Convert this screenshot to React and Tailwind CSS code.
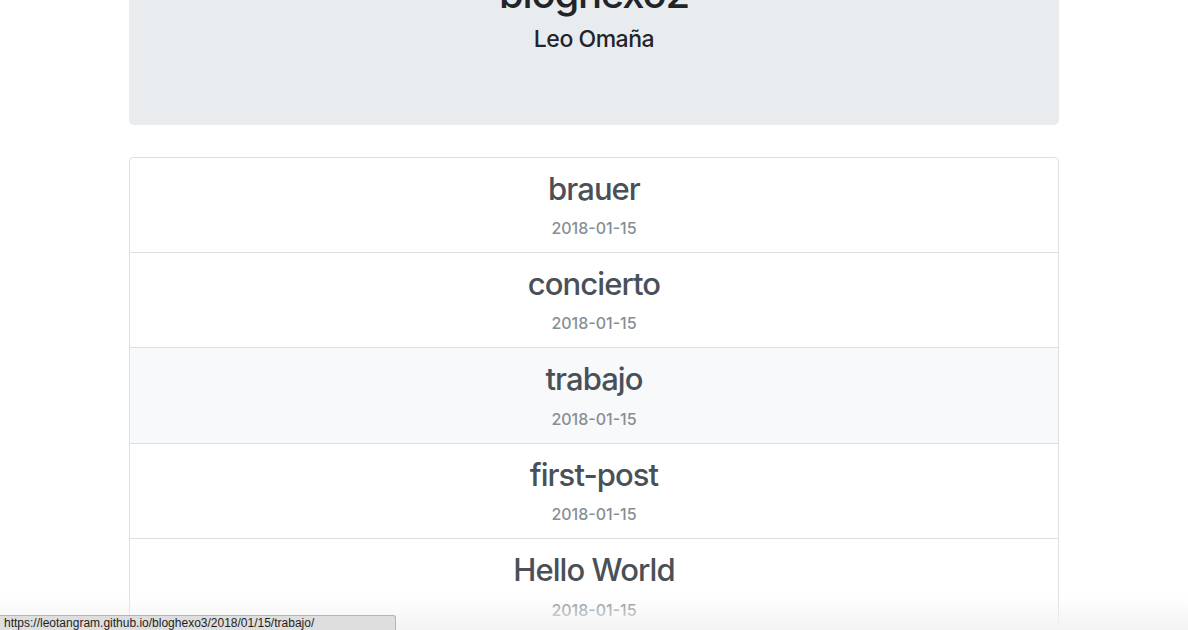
const posts = [
  { title: "brauer", date: "2018-01-15" },
  { title: "concierto", date: "2018-01-15" },
  { title: "trabajo", date: "2018-01-15", hover: true },
  { title: "first-post", date: "2018-01-15" },
  { title: "Hello World", date: "2018-01-15" },
];

function PostItem({ title, date, hover }) {
  return (
    <a
      href="#"
      className={
        "block border border-[#dfdfdf] -mb-px px-5 py-3 text-center first:rounded-t last:rounded-b " +
        (hover ? "bg-[#f8f9fa]" : "bg-white")
      }
    >
      <h2 className="text-[31px] leading-[38.4px] tracking-[-0.03em] font-medium text-[#495057] mb-2">{title}</h2>
      <p className="text-base leading-6 font-medium text-[#868e96]">{date}</p>
    </a>
  );
}

export default function App() {
  return (
    <div className="relative h-[630px] overflow-hidden bg-white font-['Inter','Liberation_Sans',sans-serif]">
      <div className="w-[960px] mx-auto px-[15px] -mt-[94px]">
        <div className="bg-[#e9ecef] rounded-[5px] px-8 pt-16 pb-[63px] text-center text-[#212529]">
          <h1 className="text-[40px] leading-[1.2] font-medium mb-2 tracking-[-0.03em]">bloghexo2</h1>
          <h4 className="text-[23px] leading-[1.2] font-medium mb-2 tracking-[-0.02em]">Leo Omaña</h4>
        </div>
        <div className="mt-8 flex flex-col">
          {posts.map((p) => (
            <PostItem key={p.title} {...p} />
          ))}
        </div>
      </div>
      <div className="absolute inset-x-0 bottom-0 h-[34px] bg-gradient-to-b from-white/0 to-[#f3f3f3] pointer-events-none" />
      <div className="absolute left-0 bottom-0 w-[396px] h-[15px] bg-[#dedede] border-t border-r border-[#b4b4b4] rounded-tr-[3px] px-[4px] text-[12px] leading-[14px] text-[#1e1e1e] font-['Liberation_Sans',sans-serif] whitespace-nowrap overflow-hidden">
        https://leotangram.github.io/bloghexo3/2018/01/15/trabajo/
      </div>
    </div>
  );
}
